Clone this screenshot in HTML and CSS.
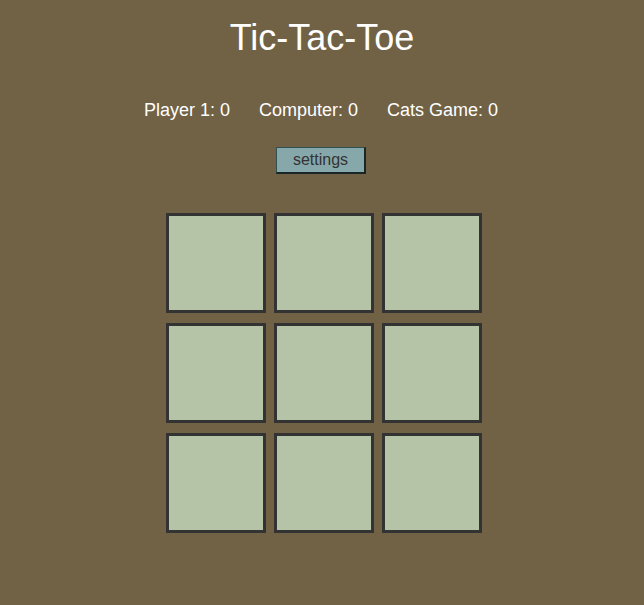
FILE: index.html
```html
<!DOCTYPE html>
<html>
<head>
<meta charset="utf-8">
<title>Tic-Tac-Toe</title>
<link rel="stylesheet" href="styles.css">
</head>
<body>
<main class="page">
  <h1 class="title">Tic-Tac-Toe</h1>
  <div class="scores">
    <span>Player 1: 0</span>
    <span>Computer: 0</span>
    <span>Cats Game: 0</span>
  </div>
  <button class="settings">settings</button>
  <div class="board-wrap">
    <div class="board">
      <div class="cell"></div>
      <div class="cell"></div>
      <div class="cell"></div>
      <div class="cell"></div>
      <div class="cell"></div>
      <div class="cell"></div>
      <div class="cell"></div>
      <div class="cell"></div>
      <div class="cell"></div>
    </div>
  </div>
</main>
</body>
</html>
```

FILE: styles.css
```css
html, body {
  margin: 0;
  padding: 0;
  background: #716245;
  height: 100%;
}
body {
  font-family: "Liberation Sans", Arial, sans-serif;
  color: #ffffff;
}
.page {
  display: flex;
  flex-direction: column;
  align-items: center;
}
.title {
  margin: 17px 0 0;
  font-size: 36px;
  line-height: 41px;
  font-weight: normal;
}
.scores {
  margin-top: 42px;
  display: flex;
  gap: 29px;
  font-size: 18px;
  line-height: 20px;
  padding-right: 2px;
}
.settings {
  margin-top: 27px;
  width: 90px;
  height: 27px;
  padding: 0;
  background: #86a8aa;
  color: #333333;
  font-family: "Liberation Sans", Arial, sans-serif;
  font-size: 16px;
  border-style: solid;
  border-width: 1px 2px 2px 1px;
  border-color: #2f5050 #182626 #182626 #2f5050;
  margin-right: 2px;
}
.board-wrap {
  margin-top: 39px;
  padding-left: 4px;
}
.board {
  display: grid;
  grid-template-columns: repeat(3, 100px);
  grid-auto-rows: 100px;
  column-gap: 8px;
  row-gap: 10px;
}
.cell {
  box-sizing: border-box;
  background: #b5c4a6;
  border: 3px solid #333333;
}
```
